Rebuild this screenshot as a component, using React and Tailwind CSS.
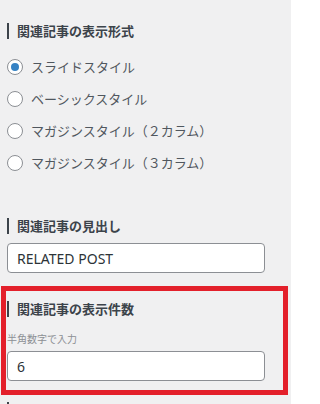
import React from "react";

const font = { fontFamily: '"Noto Sans", "Noto Sans CJK JP", sans-serif' };

function Heading({ children }) {
  return (
    <div className="flex items-center h-[16px] border-l-2 border-[#3c434a] pl-[8px] text-[13px] font-bold leading-none text-[#3c434a]">
      {children}
    </div>
  );
}

function Radio({ label, checked }) {
  return (
    <label className="flex items-center h-[32px] gap-[8px]">
      <span className="flex items-center justify-center w-[16px] h-[16px] rounded-full border border-[#8c8f94] bg-white shrink-0">
        {checked && <span className="w-[8px] h-[8px] rounded-full bg-[#3582c4]" />}
      </span>
      <span className="text-[13px] leading-none text-[#50575e]">{label}</span>
    </label>
  );
}

function Input({ value }) {
  return (
    <div className="flex items-center w-[258px] h-[30px] rounded-[4px] border border-[#8c8f94] bg-white pl-[9px] text-[14px] text-[#2c3338]">
      {value}
    </div>
  );
}

export default function App() {
  return (
    <div className="w-[291px] h-[404px] bg-[#f0f0f1] overflow-hidden flex flex-col" style={font}>
      <div className="px-[7px] pt-[23px]">
        <Heading>関連記事の表示形式</Heading>
        <div className="mt-[12px] flex flex-col">
          <Radio label="スライドスタイル" checked />
          <Radio label="ベーシックスタイル" />
          <Radio label="マガジンスタイル（２カラム）" />
          <Radio label="マガジンスタイル（３カラム）" />
        </div>
      </div>
      <div className="px-[7px] mt-[39px]">
        <Heading>関連記事の見出し</Heading>
        <div className="mt-[9px]">
          <Input value="RELATED POST" />
        </div>
      </div>
      <div className="ml-[1px] mt-[13px] w-[287px] border-[5px] border-[#e3202b] pt-[10px] pb-[9px] pl-[1px]">
        <Heading>関連記事の表示件数</Heading>
        <div className="mt-[15px] h-[14px] flex items-center text-[10px] leading-none text-[#8c8f94]">半角数字で入力</div>
        <div className="mt-[5px]">
          <Input value="6" />
        </div>
      </div>
      <div className="px-[7px] mt-[7px]">
        <div className="h-[16px] border-l-2 border-[#3c434a]" />
      </div>
    </div>
  );
}
